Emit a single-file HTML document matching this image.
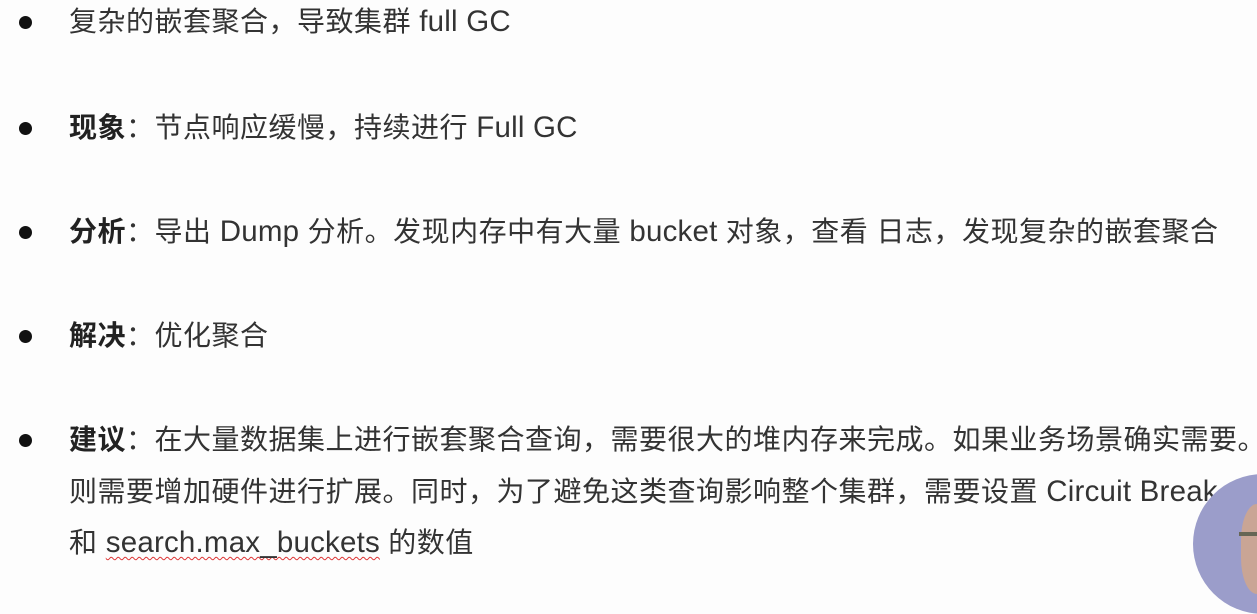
<!DOCTYPE html>
<html><head><meta charset="utf-8"><style>
html,body{margin:0;padding:0;background:#fdfdfd;}
body{width:1257px;height:567px;position:relative;overflow:hidden;font-family:"Liberation Sans","Noto Sans CJK SC",sans-serif;color:#333;font-size:28px;}
.l{position:absolute;left:69px;white-space:nowrap;line-height:36px;letter-spacing:0.5px;}
.e{font-size:29.5px;letter-spacing:0.2px;}
.d{position:absolute;left:19px;width:13px;height:13px;border-radius:50%;background:#111;}
b{font-weight:bold;color:#222}
.u{text-decoration:underline wavy #d33;text-decoration-thickness:1px;text-underline-offset:4px;}
.c{position:absolute;left:1193px;top:474px;width:140px;height:140px;border-radius:50%;background:#9b9dca;overflow:hidden;}
</style></head><body>
<div class="d" style="top:16px"></div><div class="l" style="top:4px">复杂的嵌套聚合，导致集群 <span class="e">full GC</span></div>
<div class="d" style="top:122px"></div><div class="l" style="top:110px"><b>现象</b>：节点响应缓慢，持续进行 <span class="e">Full GC</span></div>
<div class="d" style="top:226px"></div><div class="l" style="top:214px"><b>分析</b>：导出 <span class="e">Dump</span> 分析。发现内存中有大量 <span class="e">bucket</span> 对象，查看 日志，发现复杂的嵌套聚合</div>
<div class="d" style="top:330px"></div><div class="l" style="top:318px"><b>解决</b>：优化聚合</div>
<div class="d" style="top:434px"></div><div class="l" style="top:422px"><b>建议</b>：在大量数据集上进行嵌套聚合查询，需要很大的堆内存来完成。如果业务场景确实需要。</div>
<div class="l" style="top:474px">则需要增加硬件进行扩展。同时，为了避免这类查询影响整个集群，需要设置 <span class="e">Circuit Break</span></div>
<div class="l" style="top:525px">和 <span class="e u">search.max_buckets</span> 的数值</div>
<div class="c"><div style="position:absolute;left:48px;top:30px;width:40px;height:90px;border-radius:40% 0 0 40%;background:#c9a595"></div><div style="position:absolute;left:46px;top:58px;width:30px;height:4px;background:#665"></div></div>
</body></html>
